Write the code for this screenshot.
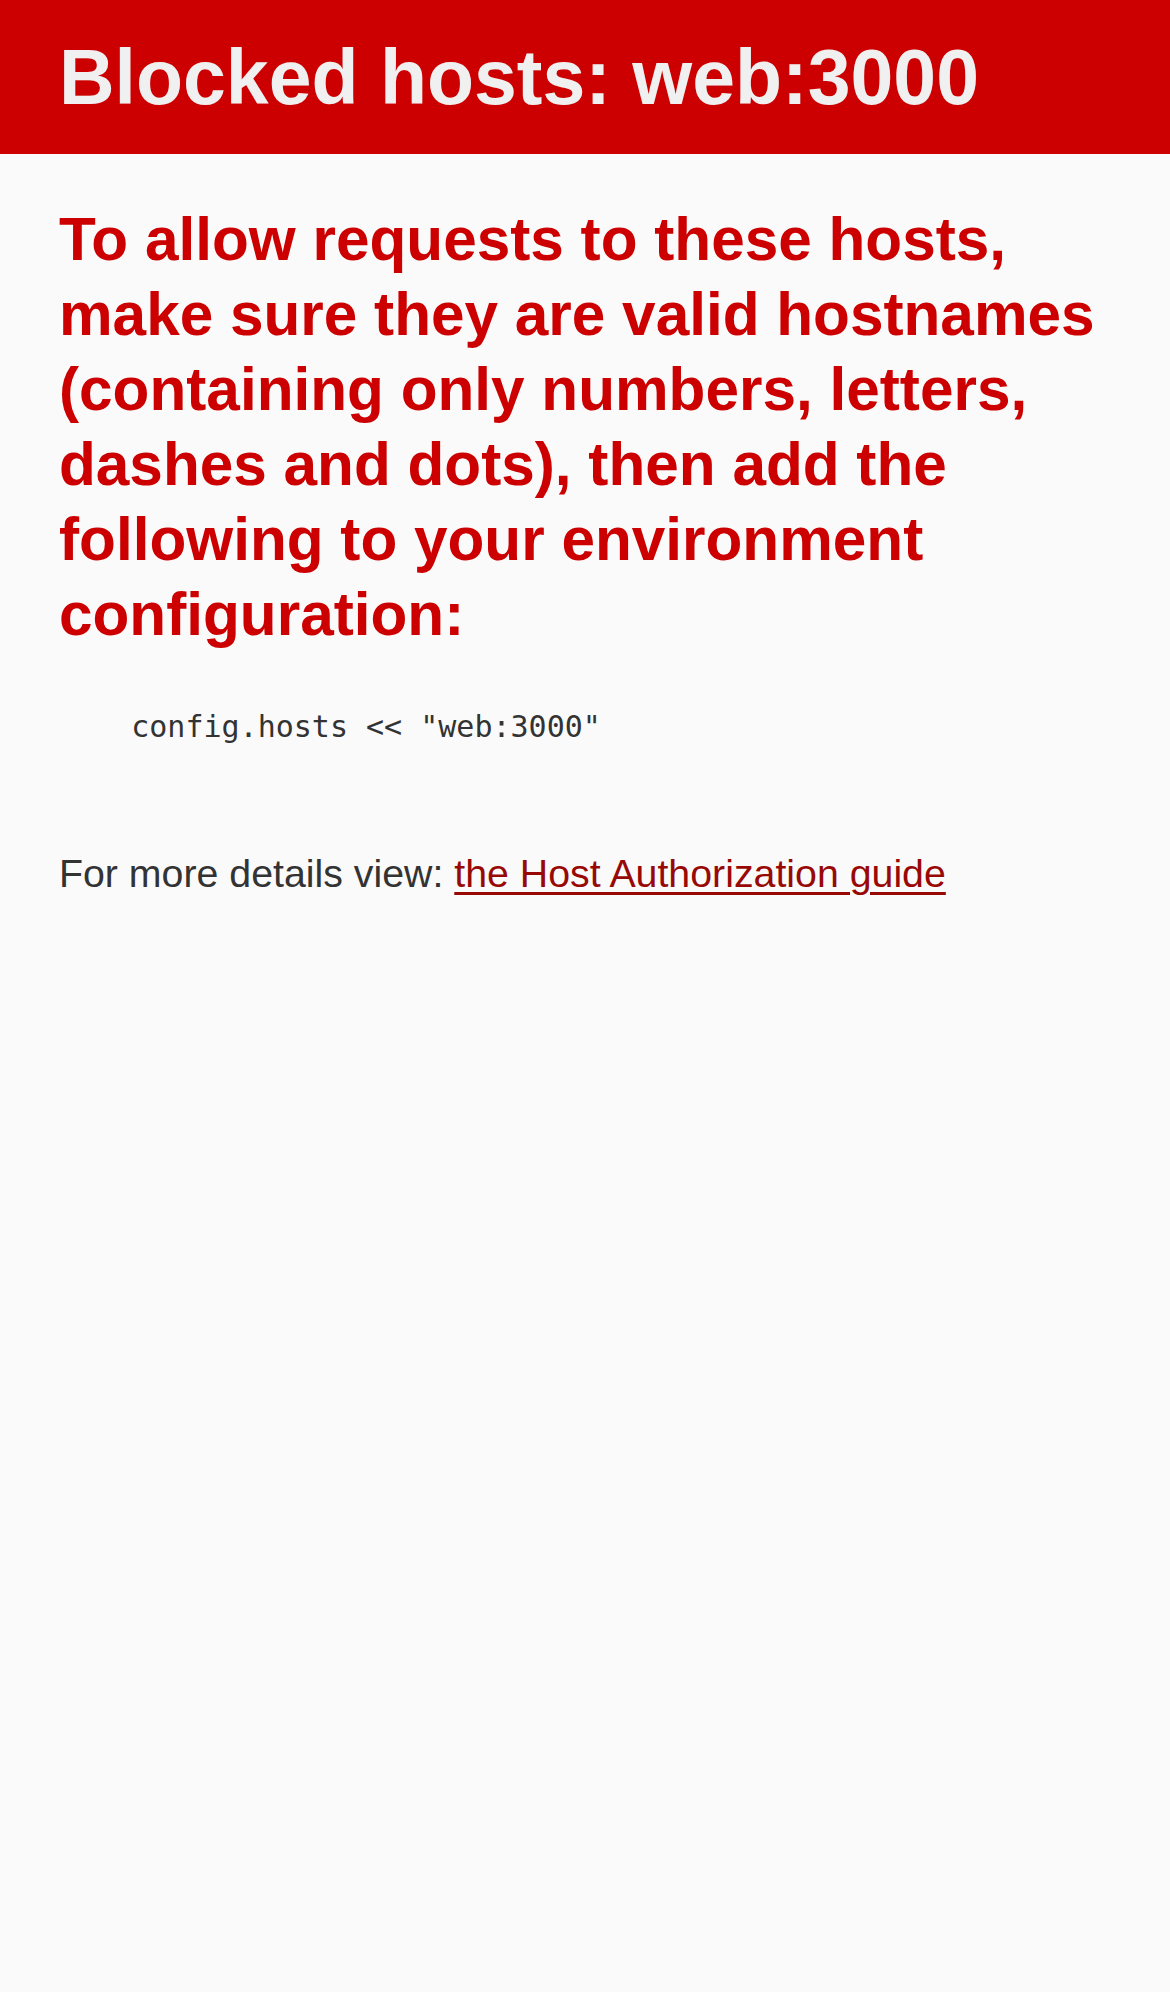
const App = () => {
  const host = "web:3000";

  return (
    <div className="min-h-[1992px] bg-[#FAFAFA] text-[#333] font-['Liberation_Sans',Arial,sans-serif]">
      <header className="bg-[#C00] px-[59px] py-[19px] text-[#F0F0F0]">
        <h1 className="my-[15.5px] text-[77px] leading-[85px] font-bold">
          Blocked hosts: {host}
        </h1>
      </header>
      <main className="px-[59px]">
        <h2 className="pt-[48px] pb-[48px] text-[60.3px] leading-[75px] font-bold text-[#C00]">
          To allow requests to these hosts, make sure they are valid hostnames
          (containing only numbers, letters, dashes and dots), then add the
          following to your environment configuration:
        </h2>
        <pre className="whitespace-pre-wrap text-[30px] leading-[54px] font-['DejaVu_Sans_Mono',monospace]">
          {`    config.hosts << "${host}"\n  `}
        </pre>
        <p className="mt-[38px] text-[39.3px] leading-[54px]">
          For more details view:{" "}
          <a
            href="#"
            className="text-[#980905] underline decoration-[3px] underline-offset-[5px]"
          >
            the Host Authorization guide
          </a>
        </p>
      </main>
    </div>
  );
};

export default App;
